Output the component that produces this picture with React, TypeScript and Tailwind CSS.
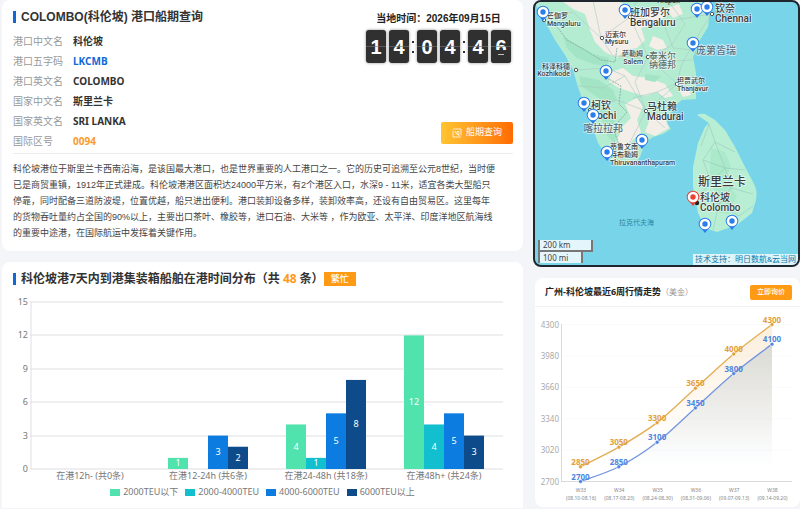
import { Fragment } from 'react';
import clsx from 'clsx';

type InfoRow = {
  label: string;
  value: string;
  color?: string;
};

type Point = [number, number];

type MapLabel = {
  x: number;
  y: number;
  lines: string[];
  size: string;
  gap: number;
  color?: string;
  anchor?: 'start' | 'end';
};

const NOTO = "font-['Noto_Sans','Noto_Sans_CJK_SC',sans-serif]";
const ARIAL = "font-['Liberation_Sans','Noto_Sans_CJK_SC',sans-serif]";
const ROBOTO = "font-['Roboto','Noto_Sans_CJK_SC',sans-serif]";

const infoRows: InfoRow[] = [
  { label: '港口中文名', value: '科伦坡' },
  { label: '港口五字码', value: 'LKCMB', color: 'text-[#0f68d8]' },
  { label: '港口英文名', value: 'COLOMBO' },
  { label: '国家中文名', value: '斯里兰卡' },
  { label: '国家英文名', value: 'SRI LANKA' },
  { label: '国际区号', value: '0094', color: 'text-[#fb9a2c]' },
];

const series = [
  { name: '2000TEU以下', fill: 'fill-[#50e3ad]', bg: 'bg-[#50e3ad]' },
  { name: '2000-4000TEU', fill: 'fill-[#12bfce]', bg: 'bg-[#12bfce]' },
  { name: '4000-6000TEU', fill: 'fill-[#0c7ce0]', bg: 'bg-[#0c7ce0]' },
  { name: '6000TEU以上', fill: 'fill-[#0d4b8a]', bg: 'bg-[#0d4b8a]' },
];

const groups = [
  { label: '在港12h- (共0条)', values: [0, 0, 0, 0] },
  { label: '在港12-24h (共6条)', values: [1, 0, 3, 2] },
  { label: '在港24-48h (共18条)', values: [4, 1, 5, 8] },
  { label: '在港48h+ (共24条)', values: [12, 4, 5, 3] },
];

const weeks = [
  { week: 'W33', range: '(08.10-08.16)', high: 2850, low: 2700 },
  { week: 'W34', range: '(08.17-08.23)', high: 3050, low: 2850 },
  { week: 'W35', range: '(08.24-08.30)', high: 3300, low: 3100 },
  { week: 'W36', range: '(08.31-09.06)', high: 3650, low: 3450 },
  { week: 'W37', range: '(09.07-09.13)', high: 4000, low: 3800 },
  { week: 'W38', range: '(09.14-09.20)', high: 4300, low: 4100 },
];

const markers: Point[] = [
  [10, 12], [92, 10], [164, 9], [174, 7], [160, 43], [73, 71],
  [51, 103], [60, 115], [109, 140], [74, 152], [172, 224], [199, 221],
];

const cities: Point[] = [
  [11, 20], [97, 17], [179, 14], [69, 38], [115, 57], [43, 70], [144, 84], [57, 110], [113, 111],
];

const mapLabels: MapLabel[] = [
  { x: 14, y: 18, lines: ['芒伽罗', 'Mangaluru'], size: 'text-[7px]', gap: 8 },
  { x: 97, y: 16, lines: ['班加罗尔', 'Bengaluru'], size: 'text-[10px]', gap: 10 },
  { x: 182, y: 12, lines: ['钦奈', 'Chennai'], size: 'text-[10px]', gap: 10 },
  { x: 72, y: 37, lines: ['迈索尔', 'Mysuru'], size: 'text-[7px]', gap: 7 },
  { x: 110, y: 56, lines: ['萨勒姆', 'Salem'], size: 'text-[7px]', gap: 8, anchor: 'end' },
  { x: 37, y: 69, lines: ['科泽科德', 'Kozhikode'], size: 'text-[7px]', gap: 7, anchor: 'end' },
  { x: 144, y: 83, lines: ['坦贾武尔', 'Thanjavur'], size: 'text-[7px]', gap: 8 },
  { x: 58, y: 109, lines: ['柯钦', 'Kochi'], size: 'text-[10px]', gap: 10 },
  { x: 114, y: 110, lines: ['马杜赖', 'Madurai'], size: 'text-[10px]', gap: 10 },
  { x: 77, y: 149, lines: ['蒂鲁文南', '特布勒姆', 'Thiruvananthapuram'], size: 'text-[7px]', gap: 8 },
  { x: 116, y: 59, lines: ['泰米尔', '纳德邦'], size: 'text-[9px]', gap: 9, color: 'fill-[#5c6f6c]' },
  { x: 163, y: 54, lines: ['庞第皆瑞'], size: 'text-[10px]', gap: 10, color: 'fill-[#5c6f7c]' },
  { x: 50, y: 132, lines: ['喀拉拉邦'], size: 'text-[10px]', gap: 10, color: 'fill-[#5c6f7c]' },
  { x: 165, y: 186, lines: ['斯里兰卡'], size: 'text-[12px]', gap: 10 },
  { x: 167, y: 201, lines: ['科伦坡', 'Colombo'], size: 'text-[10px]', gap: 10 },
];

function smoothPath(points: Point[]) {
  let d = `M${points[0][0]},${points[0][1]}`;
  for (let i = 0; i < points.length - 1; i++) {
    const p0 = points[i - 1] ?? points[i];
    const p1 = points[i];
    const p2 = points[i + 1];
    const p3 = points[i + 2] ?? p2;
    d += ` C${p1[0] + (p2[0] - p0[0]) / 6},${p1[1] + (p2[1] - p0[1]) / 6}`;
    d += ` ${p2[0] - (p3[0] - p1[0]) / 6},${p2[1] - (p3[1] - p1[1]) / 6} ${p2[0]},${p2[1]}`;
  }
  return d;
}

function ClockTile({ digit, flipping }: { digit: string; flipping?: boolean }) {
  return (
    <span className="relative flex h-[33px] w-5 items-center justify-center overflow-hidden rounded-[3px] bg-[#303030] text-xl leading-none font-bold text-white shadow-[0_0_3px_rgba(0,0,0,0.45)]">
      {digit}
      {/* folded lower half of a digit that is about to change */}
      {flipping && (
        <span className="absolute inset-x-0 top-5 bottom-0 bg-[#303030]">
          <span className="mx-auto mt-1 block h-px w-1.5 bg-white/70" />
        </span>
      )}
      <span className="absolute inset-x-0 top-4 h-px bg-[#777]/60" />
    </span>
  );
}

function FlipClock() {
  const pairs = ['14', '04', '46'];
  return (
    <div className="flex" role="timer">
      {pairs.map((pair, index) => (
        <Fragment key={index}>
          {index > 0 && (
            <span className="flex w-2 flex-col items-center justify-center gap-2">
              <span className="size-0.5 bg-[#303030]" />
              <span className="size-0.5 bg-[#303030]" />
            </span>
          )}
          <span className="flex gap-[3px]">
            <ClockTile digit={pair[0]} />
            <ClockTile digit={pair[1]} flipping={index === 2} />
          </span>
        </Fragment>
      ))}
    </div>
  );
}

function PortInfo() {
  return (
    <section className={clsx('rounded-lg bg-white pr-2.5 pb-2.5 pl-[11px] pt-[7px]', ARIAL)}>
      <div className="flex justify-between border-b border-[#ececf0] pb-0.5">
        <div>
          <h1 className="flex items-center gap-[5px] text-xs leading-5 font-bold text-[#333]">
            <span className="h-3 w-[3px] bg-[#0f68d8]" />
            COLOMBO(科伦坡) 港口船期查询
          </h1>
          <dl className={clsx('mt-1 grid grid-cols-[60px_auto] text-[10px] leading-5', NOTO)}>
            {infoRows.map((row) => (
              <Fragment key={row.label}>
                <dt className="text-[#999]">{row.label}</dt>
                <dd className={clsx('font-bold', row.color ?? 'text-[#333]')}>{row.value}</dd>
              </Fragment>
            ))}
          </dl>
        </div>
        <div className="flex flex-col items-end justify-between pt-1 pb-[7px]">
          <div className="flex flex-col items-center gap-[3px] pr-0.5">
            <p className="text-[10px] leading-4 font-bold text-[#222]">当地时间：2026年09月15日</p>
            <FlipClock />
          </div>
          <button className="flex h-[22px] items-center gap-1 rounded-xs bg-linear-to-r from-[#ffc431] to-[#ff6b00] px-[11px] text-[9px] text-white">
            <svg viewBox="0 0 10 10" className="size-2.5" fill="none" stroke="currentColor" strokeWidth="0.8">
              <path d="M2.5 1H9v6.5M1 2.5v6.500h6.500M1 1h1.500M9 9H7.500" />
              <path d="M3 3l1.500 3M5 3.500h2v3H5zM6 6.500l1.500 1.500" />
            </svg>
            船期查询
          </button>
        </div>
      </div>
      <p className="pt-[7px] pr-4 text-[9px] leading-4 text-[#444]">
        科伦坡港位于斯里兰卡西南沿海，是该国最大港口，也是世界重要的人工港口之一。它的历史可追溯至公元8世纪，当时便已是商贸重镇，1912年正式建成。科伦坡港港区面积达24000平方米，有2个港区入口，水深9 - 11米，适宜各类大型船只停靠，同时配备三道防波堤，位置优越，船只进出便利。港口装卸设备多样，装卸效率高，还设有自由贸易区。这里每年的货物吞吐量约占全国的90%以上，主要出口茶叶、橡胶等，进口石油、大米等 ，作为欧亚、太平洋、印度洋地区航海线的重要中途港，在国际航运中发挥着关键作用。
      </p>
    </section>
  );
}

function BerthChart() {
  const baseY = 180;
  const unit = 167 / 15;
  return (
    <section className={clsx('rounded-t-lg bg-white pt-[7px] pb-2', NOTO)}>
      <h2 className="flex items-center px-[11px] text-xs leading-5 font-bold text-[#333]">
        <span className="mr-[5px] h-3 w-[3px] bg-[#0f68d8]" />
        科伦坡港7天内到港集装箱船舶在港时间分布（共
        <span className="mx-[3px] text-[#ff9a1e]">48</span>
        条）
        <span className="bg-[#ff9a14] px-[7px] text-[9px] leading-[14px] font-medium text-white">繁忙</span>
      </h2>
      <svg viewBox="0 0 521 195" className="block w-full" role="img" aria-label="在港时间分布">
        {[0, 3, 6, 9, 12, 15].map((tick) => {
          const y = Math.round(baseY - tick * unit);
          return (
            <g key={tick}>
              <line x1="28" x2="501" y1={y} y2={y} className="stroke-[#dfdfe3]" />
              <text x="26" y={y + 3} textAnchor="end" className="fill-[#777] text-[9px]">{tick}</text>
            </g>
          );
        })}
        <line x1="29" x2="29" y1="13" y2="180" className="stroke-[#dfdfe8]" />
        {groups.map((group, g) => {
          const center = 88 + g * 118;
          return (
            <g key={group.label}>
              {group.values.map((value, i) => {
                if (!value) return null;
                const x = center - 40 + i * 20;
                const height = value * unit;
                return (
                  <g key={series[i].name}>
                    <rect x={x} y={baseY - height} width="20" height={height} className={series[i].fill} />
                    <text x={x + 10} y={baseY - height / 2 + 3} textAnchor="middle" className="fill-white text-[9px]">
                      {value}
                    </text>
                  </g>
                );
              })}
              <text x={center} y="190" textAnchor="middle" className="fill-[#777] text-[9px]">{group.label}</text>
            </g>
          );
        })}
      </svg>
      <ul className="flex justify-center gap-[7px] text-[9px] leading-4 text-[#777]">
        {series.map((item) => (
          <li key={item.name} className="flex items-center gap-[3px]">
            <span className={clsx('h-[7px] w-2.5', item.bg)} />
            {item.name}
          </li>
        ))}
      </ul>
    </section>
  );
}

function Marker({ x, y, red }: { x: number; y: number; red?: boolean }) {
  const color = red ? 'fill-[#ea4335]' : 'fill-[#2b7de9]';
  return (
    <g transform={`translate(${x} ${y})`}>
      <path d="M-6.300 0a6.300 6.300 0 1 1 12.600 0c0 3-2.800 4.800-4.300 6.500L0 9l-2-2.500C-3.500 4.800-6.300 3-6.300 0z" className={color} />
      <circle r="5.300" className="fill-white" />
      <circle r="2.700" className={color} />
    </g>
  );
}

function PortMap() {
  return (
    <section className={clsx('relative overflow-hidden rounded-lg border-2 border-[#20262e] bg-[#78d4e9]', ROBOTO)}>
      <svg viewBox="2 2 263 263" className="block w-full" role="img" aria-label="港口地图">
        <defs>
          <clipPath id="mainland">
            <path d="M0 0L5 9 10 18 22 40 32 55 40 70 45 87 52 107 60 128 65 143 75 158 87 166 102 165 107 157 112 143 120 137 130 134 138 129 134 123 140 107 149 100 163 99 163 73 160 57 167 40 175 27 177 10 176 0z" />
          </clipPath>
        </defs>
        <g clipPath="url(#mainland)">
          <rect width="267" height="267" className="fill-[#b4ecd2]" />
          <g className="fill-[#f3eee8]">
            <path d="M28 0L40 9 52 14 57 30 62 42 72 52 84 58 92 50 104 48 112 40 108 28 124 24 134 14 120 8 104 14 90 4 84 0z" />
            <path d="M78 72L90 68 100 76 116 78 132 84 140 96 132 98 124 92 112 96 98 92 86 88 76 82z" />
            <path d="M92 104L104 98 110 106 104 120 108 132 100 140 92 150 84 140 90 126 98 118z" />
            <path d="M120 36L130 40 134 48 124 50 116 46zM134 8L146 4 150 14 140 18z" />
            <path d="M118 116L130 114 136 128 122 136 112 132zM146 90L156 88 158 95 150 97z" />
          </g>
          <g className="fill-[#a2e4c3]">
            <path d="M30 36L46 46 60 54 76 58 74 66 60 64 44 58 34 48z" />
            <path d="M46 76L66 80 80 90 84 100 74 104 60 94 48 86z" />
            <path d="M66 108L78 112 84 126 82 144 74 136 70 122z" />
            <path d="M96 54L108 52 108 62 98 64zM112 74L128 76 122 82 112 80z" />
          </g>
          <g fill="none" strokeWidth="0.6" className="stroke-[#a9c9c2]">
            <path d="M10 18L40 12 68 38 97 17 130 22 178 14M68 38L80 56 115 57 144 84 163 90" />
            <path d="M43 70L74 68 92 76 113 111 144 84M97 17L115 57 102 82 113 111 88 160" />
            <path d="M57 110L84 100 113 111 132 128M130 22L140 48 160 50M178 14L160 44 148 66 144 84" />
            <path d="M115 57L138 46 152 24 136 2M104 0L97 17M60 0L68 38M45 86L70 88 92 76" />
            <path d="M124 92L160 76M100 98L124 92 138 106M120 62L160 60" />
          </g>
          <path d="M14 14L34 40 52 50 68 60 82 62 84 48M74 78L88 86 86 104 94 112 80 128 88 150" fill="none" strokeWidth="0.8" strokeDasharray="2 1" className="stroke-[#7da79c]" />
        </g>
        {/* Sri Lanka */}
        <path d="M164 115Q168 113 172 114L182 120 192 130 202 147 210 163 220 182Q225 190 223 200L219 213 204 225 184 232 172 228 165 213 160 187 160 167 165 143 172 127 176 123z" className="fill-[#b8efd4]" />
        <path d="M178 148L192 152 198 166 192 180 204 196 196 214 182 212 186 196 176 182z" className="fill-[#aae9ca]" />
        <path d="M176 124L182 142 170 160 178 182 165 198M182 142L202 152M170 160L192 168 212 170M178 182L192 168 198 188 220 194M165 198L186 204 198 188M186 204L180 230M186 204L206 216 220 206M182 142L192 168M176 124L168 146" fill="none" strokeWidth="0.7" className="stroke-[#9ccdbe]" />
        {cities.map(([x, y]) => (
          <circle key={`${x}-${y}`} cx={x} cy={y} r="1.700" strokeWidth="0.9" className="fill-white stroke-[#444]" />
        ))}
        <circle cx="164" cy="203" r="2.200" className="fill-[#222]" />
        <text x="123" y="3" className="fill-[#333] text-[7px]">Tirupati</text>
        {mapLabels.map((label) => (
          <text
            key={label.lines[0]}
            textAnchor={label.anchor ?? 'start'}
            strokeWidth="1.500"
            paintOrder="stroke"
            strokeLinejoin="round"
            className={clsx('stroke-white/70 font-medium', label.size, label.color ?? 'fill-[#3c3c3c]')}
          >
            {label.lines.map((line, i) => (
              <tspan key={line} x={label.x} y={label.y + i * label.gap}>{line}</tspan>
            ))}
          </text>
        ))}
        <text x="86" y="225" className="fill-[#2b87a3] text-[7px]">拉克代夫海</text>
        {markers.map(([x, y]) => (
          <Marker key={`${x}-${y}`} x={x} y={y} />
        ))}
        <Marker x={160} y={197} red />
      </svg>
      <div className={clsx('absolute bottom-0.5 left-[3px] text-[8px] text-[#444]', NOTO)}>
        <div className="h-3 w-[55px] border-2 border-t-0 border-[#777] bg-white/80 pl-[3px] leading-[10px]">200 km</div>
        <div className="h-[11px] w-[45px] border-x-2 border-[#777] bg-white/80 pl-[3px] leading-[11px]">100 mi</div>
      </div>
      <a href="#" className="absolute right-0 bottom-0 bg-white/75 px-0.5 text-[8px] leading-[11px] text-[#0e78a8]">
        技术支持：明日数航&amp;云当网
      </a>
    </section>
  );
}

function PriceTrend() {
  const toY = (price: number) => 174.5 - ((price - 2700) * 157) / 1600;
  const high = weeks.map((w, i): Point => [45.5 + i * 38.3, toY(w.high)]);
  const low = weeks.map((w, i): Point => [45.5 + i * 38.3, toY(w.low)]);
  const lines = [
    { key: 'high' as const, points: high, stroke: 'stroke-[#e3ac50]', fill: 'fill-[#e3a03c]', area: 'url(#highArea)' },
    { key: 'low' as const, points: low, stroke: 'stroke-[#7495e0]', fill: 'fill-[#4f86e0]', area: 'url(#lowArea)' },
  ];

  return (
    <section className={clsx('ml-0.5 rounded-lg bg-white', NOTO)}>
      <header className="flex h-[29px] items-center border-b border-[#f1f1f4] pr-2 pl-2.5">
        <h2 className="text-[9px] font-bold text-[#222]">广州-科伦坡最近6周行情走势</h2>
        <span className="text-[8px] text-[#999]">（美金）</span>
        <button className="ml-auto h-[15px] rounded-xs bg-[#ff9a14] px-[7px] text-[7px] font-medium text-white">立即询价</button>
      </header>
      <svg viewBox="0 0 265 200" className="block w-full" role="img" aria-label="行情走势">
        <defs>
          <linearGradient id="highArea" x1="0" y1="0" x2="0" y2="1">
            <stop offset="0" stopColor="#f3c98a" stopOpacity="0.3" />
            <stop offset="0.8" stopColor="#f3c98a" stopOpacity="0" />
          </linearGradient>
          <linearGradient id="lowArea" x1="0" y1="0" x2="0" y2="1">
            <stop offset="0" stopColor="#a9b9c4" stopOpacity="0.4" />
            <stop offset="0.9" stopColor="#a9b9c4" stopOpacity="0" />
          </linearGradient>
        </defs>
        {[2700, 3020, 3340, 3660, 3980, 4300].map((tick) => (
          <g key={tick}>
            <line x1="27" x2="257" y1={toY(tick)} y2={toY(tick)} className={tick === 2700 ? 'stroke-[#d8dade]' : 'stroke-[#fafafb]'} />
            <text x="24" y={toY(tick) + 3} textAnchor="end" className="fill-[#aaa] text-[8px]">{tick}</text>
          </g>
        ))}
        <line x1="26.500" x2="26.500" y1="17" y2="175" className="stroke-[#d8dade]" />
        {lines.map((line) => (
          <g key={line.key}>
            <path d={`${smoothPath(line.points)} V174.5 H45.5 Z`} fill={line.area} />
            <path d={smoothPath(line.points)} fill="none" strokeWidth="1.3" className={line.stroke} />
          </g>
        ))}
        {lines.map((line) =>
          line.points.map(([x, y], i) => (
            <g key={`${line.key}-${i}`}>
              <circle cx={x} cy={y} r="2" strokeWidth="0.6" className={clsx('stroke-white', line.fill)} />
              <text x={x} y={y - 2} textAnchor="middle" className={clsx('text-[8px] font-bold', line.fill)}>
                {weeks[i][line.key]}
              </text>
            </g>
          ))
        )}
        {weeks.map((w, i) => (
          <text key={w.week} textAnchor="middle" className="fill-[#888] text-[5px]">
            <tspan x={46 + i * 38.3} y="185">{w.week}</tspan>
            <tspan x={46 + i * 38.3} y="193">{w.range}</tspan>
          </text>
        ))}
      </svg>
    </section>
  );
}

export default function App() {
  return (
    <main className="grid min-h-screen grid-cols-[minmax(0,521fr)_minmax(0,267fr)] gap-x-2.5 bg-[#f4f5f8] pl-0.5">
      <div className="flex flex-col gap-[11px]">
        <PortInfo />
        <BerthChart />
      </div>
      <div className="flex flex-col gap-[11px]">
        <PortMap />
        <PriceTrend />
      </div>
    </main>
  );
}
